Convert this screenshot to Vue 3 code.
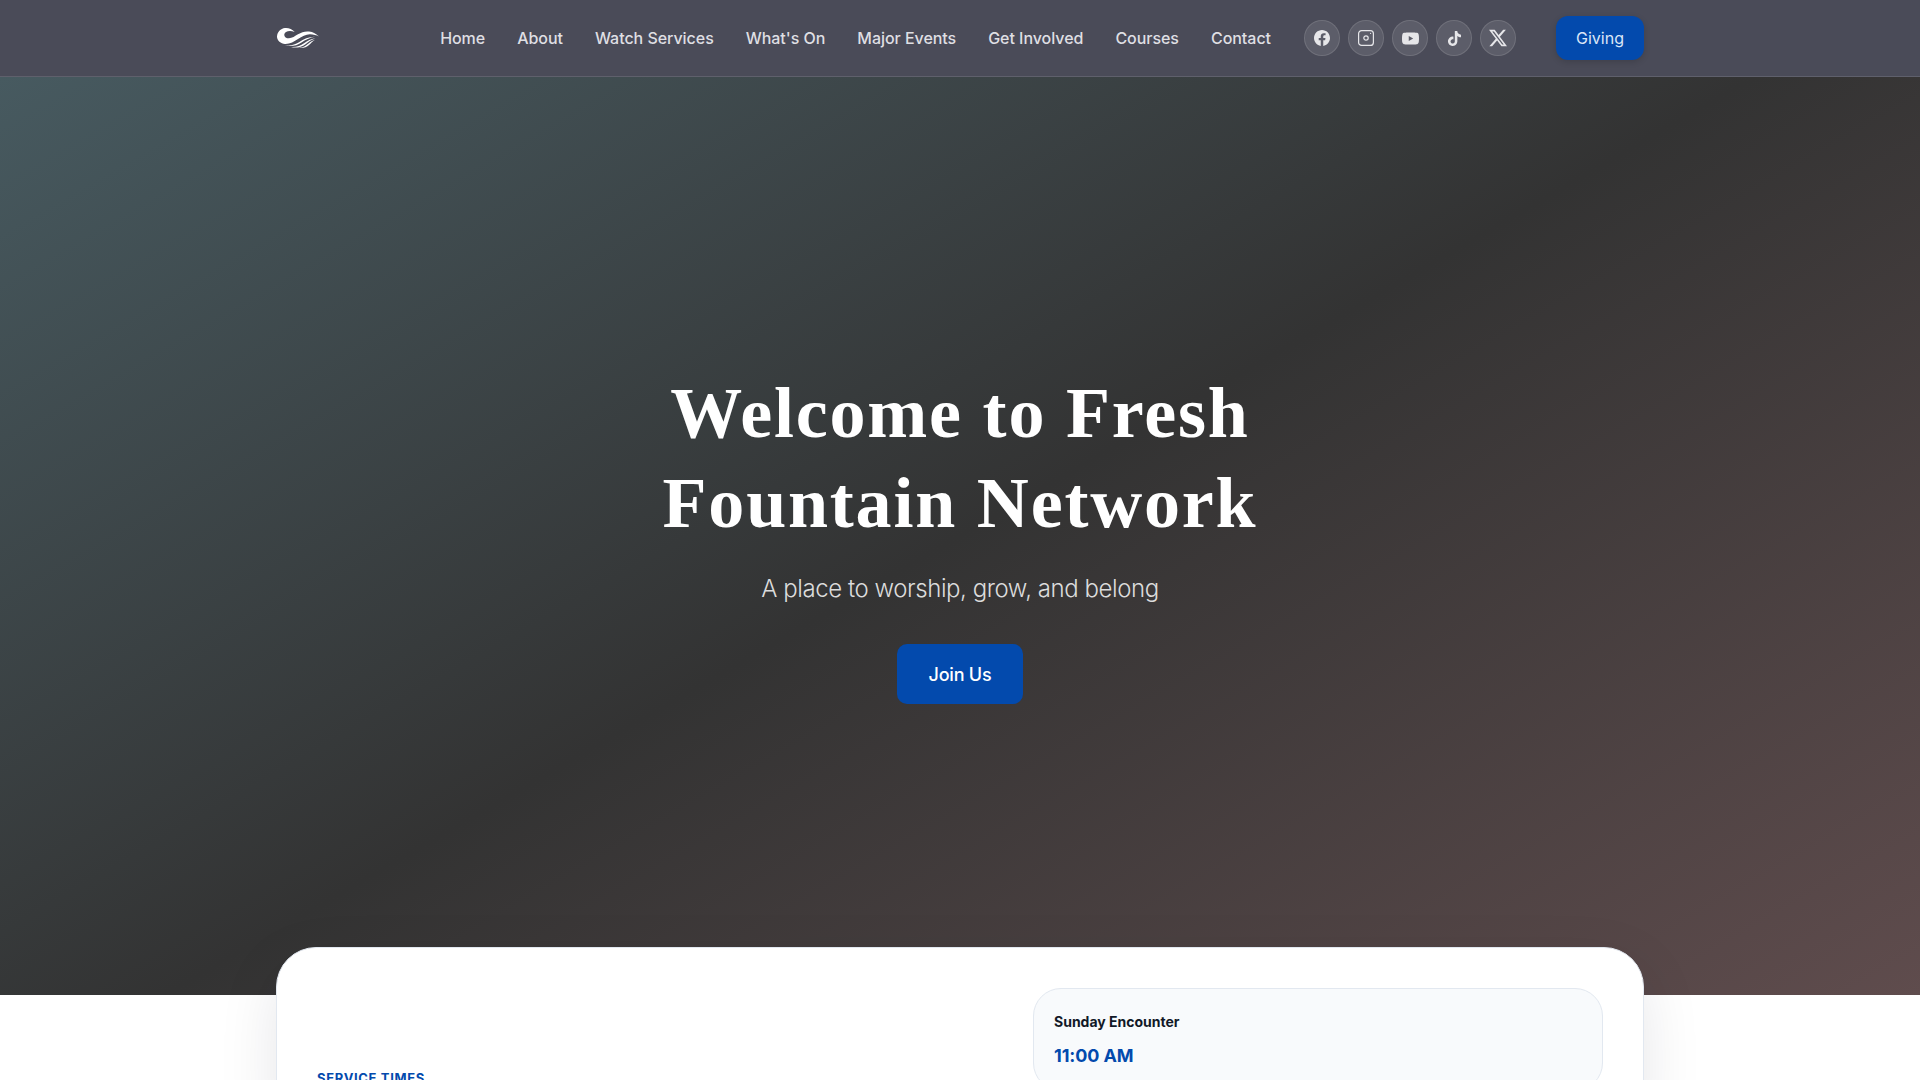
<template>
  <div class="page">
    <header class="site-header">
      <div class="container nav-row">
        <a class="logo" href="#" aria-label="Fresh Fountain Network">
          <svg viewBox="0 0 42 20" width="42" height="20">
            <path d="M17.700 4C15 1.200 11.500-.3 8 .1 3.500.6.300 4 0 8.500-.2 12.500 3.500 15.800 8 16 13 16.200 17 13.500 21 11 25 8.500 29 6.200 33 6.300 36.500 6.400 39.500 7.200 42 8.600 39.500 5.700 36 4 32 3.500 28 3 24.500 4.300 21 6.300 18 8 15 10.300 12 10.300 9 10.300 7 8.500 7.300 6.500 7.700 3.700 12 1.800 17.700 4Z" />
            <path d="M8 17.100C13 18.300 18 16.600 22 14.200 27 11.200 32 8.600 38 8.800 33 9.600 28.500 11.800 24.500 14.500 19.500 17.800 13.500 19.200 8 17.100Z" />
            <path d="M14 19C19 19.600 23.500 17.600 27 15.200 30.500 12.800 34 10.700 38.500 10.200 34.500 11.600 31.500 13.800 28.500 16.200 24.500 19.300 19 20.400 14 19Z" />
            <path d="M22 19.800C26 19.800 29 17.700 31.500 15.500 33.500 13.800 35.500 12.500 38 11.800 35.500 13.500 34 15.300 32 17 29.500 19.200 26 20.500 22 19.800Z" />
          </svg>
        </a>
        <div class="nav-right">
          <nav class="nav-links">
            <a v-for="link in links" :key="link" href="#">{{ link }}</a>
          </nav>
          <div class="socials">
            <a class="social" href="#" aria-label="Facebook">
              <svg viewBox="0 0 24 24" width="16" height="16"><path d="M24 12.073c0-6.627-5.373-12-12-12s-12 5.373-12 12c0 5.990 4.388 10.954 10.125 11.854v-8.385H7.078v-3.470h3.047V9.430c0-3.007 1.792-4.669 4.533-4.669 1.312 0 2.686.235 2.686.235v2.953H15.830c-1.491 0-1.956.925-1.956 1.874v2.250h3.328l-.532 3.470h-2.796v8.385C19.612 23.027 24 18.062 24 12.073z" /></svg>
            </a>
            <a class="social" href="#" aria-label="Instagram">
              <svg viewBox="0 0 16 16" width="16" height="16">
                <rect x=".6" y=".6" width="14.800" height="14.800" rx="3" class="ig-line" />
                <circle cx="8" cy="8" r="2.200" class="ig-line" />
                <circle cx="12.600" cy="3.400" r=".6" />
              </svg>
            </a>
            <a class="social" href="#" aria-label="YouTube">
              <svg viewBox="0 0 24 24" width="17" height="17"><path d="M23.498 6.186a3.016 3.016 0 0 0-2.122-2.136C19.505 3.545 12 3.545 12 3.545s-7.505 0-9.377.505A3.017 3.017 0 0 0 .502 6.186C0 8.070 0 12 0 12s0 3.930.502 5.814a3.016 3.016 0 0 0 2.122 2.136c1.871.505 9.376.505 9.376.505s7.505 0 9.377-.505a3.015 3.015 0 0 0 2.122-2.136C24 15.930 24 12 24 12s0-3.930-.502-5.814zM9.545 15.568V8.432L15.818 12l-6.273 3.568z" /></svg>
            </a>
            <a class="social" href="#" aria-label="TikTok">
              <svg viewBox="0 0 24 24" width="15" height="15"><path d="M12.525.02c1.310-.02 2.610-.01 3.910-.02.080 1.530.630 3.090 1.750 4.170 1.120 1.110 2.700 1.620 4.240 1.790v4.030c-1.440-.050-2.890-.350-4.200-.970-.570-.260-1.100-.590-1.620-.930-.010 2.920.010 5.840-.020 8.750-.080 1.400-.540 2.790-1.350 3.940-1.310 1.920-3.580 3.170-5.910 3.210-1.430.080-2.860-.310-4.080-1.030-2.020-1.190-3.440-3.370-3.650-5.710-.020-.500-.030-1-.010-1.490.180-1.900 1.120-3.720 2.580-4.960 1.660-1.440 3.980-2.130 6.150-1.720.020 1.480-.040 2.960-.040 4.440-.990-.320-2.150-.230-3.020.370-.630.410-1.110 1.040-1.360 1.750-.210.510-.150 1.070-.140 1.610.240 1.640 1.820 3.020 3.500 2.870 1.120-.010 2.190-.660 2.770-1.610.190-.330.400-.670.410-1.060.100-1.790.060-3.570.070-5.360.010-4.030-.010-8.050.020-12.070z" /></svg>
            </a>
            <a class="social" href="#" aria-label="X">
              <svg viewBox="0 0 24 24" width="18" height="18"><path d="M18.901 1.153h3.680l-8.040 9.190L24 22.846h-7.406l-5.800-7.584-6.638 7.584H.474l8.600-9.830L0 1.154h7.594l5.243 6.932ZM17.610 20.644h2.039L6.486 3.240H4.298Z" /></svg>
            </a>
          </div>
          <a class="giving" href="#">Giving</a>
        </div>
      </div>
    </header>

    <section class="hero">
      <h1>Welcome to Fresh<br />Fountain Network</h1>
      <p>A place to worship, grow, and belong</p>
      <a class="join" href="#">Join Us</a>
    </section>

    <section class="services">
      <div class="container">
        <div class="service-card">
          <div class="service-intro">
            <span class="eyebrow">SERVICE TIMES</span>
          </div>
          <div class="service-list">
            <div class="service-item">
              <h3>Sunday Encounter</h3>
              <div class="time">11:00 AM</div>
            </div>
          </div>
        </div>
      </div>
    </section>
  </div>
</template>

<script setup>
const links = ['Home', 'About', 'Watch Services', "What's On", 'Major Events', 'Get Involved', 'Courses', 'Contact']
</script>

<style>
html, body {
  margin: 0;
  background: #fff;
  overflow: hidden;
}
</style>

<style scoped>
.page {
  height: 100vh;
  overflow: hidden;
  font-family: Inter, "Noto Sans", sans-serif;
}

a {
  text-decoration: none;
}

.container {
  width: 1368px;
  margin: 0 auto;
}

/* Header */
.site-header {
  background: #4a4b58;
  border-bottom: 1px solid #5f606c;
}

.nav-row {
  height: 76px;
  display: flex;
  align-items: center;
  justify-content: space-between;
}

.logo {
  display: flex;
  margin-left: 1px;
  fill: #fff;
}

.nav-right {
  display: flex;
  align-items: center;
}

.nav-links {
  display: flex;
  gap: 32px;
}

.nav-links a {
  font-size: 16px;
  font-weight: 500;
  letter-spacing: -0.04px;
  color: #dfdfe3;
}

.socials {
  display: flex;
  gap: 8px;
  margin-left: 33px;
}

.social {
  width: 36px;
  height: 36px;
  box-sizing: border-box;
  border-radius: 50%;
  display: flex;
  align-items: center;
  justify-content: center;
  background: rgba(255, 255, 255, 0.1);
  border: 1px solid rgba(255, 255, 255, 0.12);
  fill: #e6e6e9;
}

.ig-line {
  fill: none;
  stroke: #e6e6e9;
  stroke-width: 1.2;
}

.giving {
  width: 88px;
  height: 44px;
  margin-left: 40px;
  display: flex;
  align-items: center;
  justify-content: center;
  border-radius: 12px;
  background: #034aad;
  color: #dbe6f7;
  font-size: 16px;
  font-weight: 400;
  box-shadow: 0 2px 6px rgba(0, 0, 0, 0.15);
}

/* Hero */
.hero {
  height: 918px;
  display: flex;
  flex-direction: column;
  align-items: center;
  justify-content: center;
  background: linear-gradient(150deg, #475a60 0%, #333333 50%, #5f4c4d 100%);
  text-align: center;
}

.hero h1 {
  margin: 0;
  font-family: "Liberation Serif", serif;
  font-size: 72px;
  font-weight: 700;
  line-height: 90px;
  letter-spacing: 1.8px;
  color: #fff;
}

.hero p {
  margin: 25px 0 39px;
  font-size: 24px;
  font-weight: 300;
  line-height: 32px;
  letter-spacing: -0.44px;
  color: #dcdcdc;
}

.join {
  width: 126px;
  height: 60px;
  display: flex;
  align-items: center;
  justify-content: center;
  border-radius: 10px;
  background: #034aad;
  color: #fff;
  font-size: 18px;
  font-weight: 500;
  letter-spacing: -0.2px;
}

/* Service times */
.services {
  display: flow-root;
  background: #fff;
}

.service-card {
  position: relative;
  margin-top: -48px;
  padding: 40px;
  display: grid;
  grid-template-columns: 1.2fr 1fr;
  gap: 32px;
  background: #fff;
  border: 1px solid #e2e8f0;
  border-radius: 40px;
  box-shadow: 0 20px 60px rgba(15, 23, 42, 0.1);
}

.service-intro {
  padding-top: 82px;
}

.eyebrow {
  display: block;
  font-size: 13px;
  font-weight: 700;
  letter-spacing: 0.65px;
  color: #034aad;
}

.service-item {
  padding: 21px 20px 20px;
  background: #f8fafc;
  border: 1px solid #e2e8f0;
  border-radius: 28px;
}

.service-item h3 {
  margin: 0;
  font-size: 14px;
  font-weight: 700;
  line-height: 24px;
  color: #111827;
}

.time {
  margin-top: 8px;
  font-size: 18px;
  font-weight: 700;
  line-height: 28px;
  letter-spacing: -0.1px;
  color: #034aad;
}
</style>
